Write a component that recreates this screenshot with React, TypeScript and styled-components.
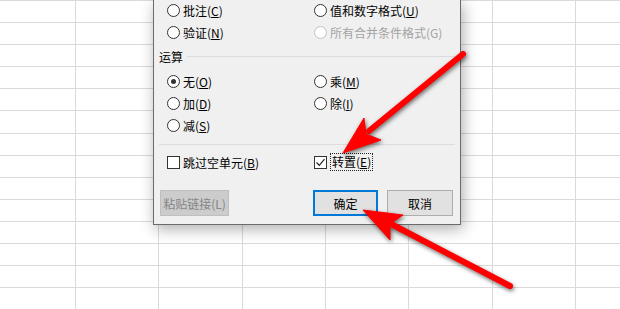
import React from 'react'
import styled, { createGlobalStyle } from 'styled-components'

const GlobalStyle = createGlobalStyle`
  html, body {
    margin: 0;
    padding: 0;
    background: #ffffff;
    overflow: hidden;
  }
  body {
    font-family: "Noto Sans CJK SC", "Noto Sans", sans-serif;
    font-size: 12px;
    color: #000;
  }
`

const Page = styled.div`
  position: relative;
  width: 620px;
  height: 309px;
  overflow: hidden;
  background: #ffffff;
`

const Sheet = styled.div`
  display: grid;
  grid-template-columns: repeat(8, 83.33px);
  grid-auto-rows: 22.1px;
  margin-left: -7.33px;
  margin-top: -21.1px;
`

const Cell = styled.div`
  border-right: 1px solid #dadada;
  border-bottom: 1px solid #dadada;
`

const Dialog = styled.div`
  position: absolute;
  left: 153px;
  top: 0;
  width: 308px;
  height: 225px;
  box-sizing: border-box;
  display: flex;
  flex-direction: column;
  padding: 0 5px;
  background: #f0f0f0;
  border: 1px solid #6b6b6b;
  border-top: none;
  box-shadow: 2px 4px 14px rgba(0, 0, 0, 0.32);
`

const OptionGrid = styled.div<{ $top?: number }>`
  display: grid;
  grid-template-columns: 147px 1fr;
  grid-auto-rows: 22px;
  padding-left: 8px;
  margin-top: ${p => p.$top ?? 0}px;
`

const Option = styled.label<{ $disabled?: boolean }>`
  display: flex;
  align-items: center;
  gap: 3px;
  white-space: nowrap;
  color: ${p => (p.$disabled ? '#a3a3a3' : '#000')};
`

const Radio = styled.span<{ $checked?: boolean; $disabled?: boolean }>`
  width: 13px;
  height: 13px;
  box-sizing: border-box;
  border-radius: 50%;
  border: 1px solid ${p => (p.$disabled ? '#c2c2c2' : '#333')};
  background: #ffffff;
  display: flex;
  align-items: center;
  justify-content: center;
  flex: none;

  &::after {
    content: '';
    width: 5px;
    height: 5px;
    border-radius: 50%;
    background: #333;
    display: ${p => (p.$checked ? 'block' : 'none')};
  }
`

const Check = styled.span`
  width: 13px;
  height: 13px;
  box-sizing: border-box;
  border: 1px solid #333;
  background: #ffffff;
  display: flex;
  align-items: center;
  justify-content: center;
  flex: none;
`

const Focus = styled.span`
  border: 1px dotted #222;
  padding: 0 1px;
  line-height: 16px;
`

const SectionHeader = styled.div`
  display: flex;
  align-items: center;
  gap: 4px;
  height: 27px;
`

const Rule = styled.div`
  flex: 1;
  height: 1px;
  background: #dcdcdc;
`

const Divider = styled.div`
  height: 1px;
  margin-top: 8px;
  background: #dcdcdc;
`

const ButtonRow = styled.div`
  display: flex;
  align-items: center;
  gap: 9px;
  margin-top: 17px;
  padding: 0 2px 0 1px;
`

const Spacer = styled.div`
  flex: 1;
`

const Button = styled.button<{ $width: number; $primary?: boolean }>`
  width: ${p => p.$width}px;
  height: 26px;
  box-sizing: border-box;
  padding: 0;
  font-family: inherit;
  font-size: 12px;
  color: #000;
  background: #e1e1e1;
  border: ${p => (p.$primary ? '2px solid #0078d7' : '1px solid #adadad')};

  &:disabled {
    background: #cccccc;
    border-color: #bfbfbf;
    color: #858585;
  }
`

const Overlay = styled.svg`
  position: absolute;
  left: 0;
  top: 0;
  pointer-events: none;
  filter: drop-shadow(1px 2px 2px rgba(0, 0, 0, 0.55));
`

const Key = ({ text, k }: { text: string; k: string }) => (
  <span>
    {text}(<u>{k}</u>)
  </span>
)

const RadioOption = ({ text, k, checked, disabled }: { text: string; k: string; checked?: boolean; disabled?: boolean }) => (
  <Option $disabled={disabled}>
    <Radio $checked={checked} $disabled={disabled} />
    {disabled ? <span>{text}({k})</span> : <Key text={text} k={k} />}
  </Option>
)

const CheckMark = () => (
  <svg width="11" height="11" viewBox="0 0 11 11">
    <path d="M1.5 5.5 L4.3 8.3 L9.5 2.2" fill="none" stroke="#222" strokeWidth="1.2" />
  </svg>
)

const Arrow = ({ shaft, head }: { shaft: [number, number, number, number]; head: string }) => (
  <g fill="#ff0000" stroke="#ff0000">
    <line x1={shaft[0]} y1={shaft[1]} x2={shaft[2]} y2={shaft[3]} strokeWidth="6" strokeLinecap="round" />
    <polygon points={head} strokeWidth="1" strokeLinejoin="round" />
  </g>
)

const App = () => {
  const cells = Array.from({ length: 8 * 15 })

  return (
    <Page>
      <GlobalStyle />
      <Sheet>
        {cells.map((_, i) => (
          <Cell key={i} />
        ))}
      </Sheet>

      <Dialog>
        <OptionGrid $top={-1}>
          <RadioOption text="批注" k="C" />
          <RadioOption text="值和数字格式" k="U" />
          <RadioOption text="验证" k="N" />
          <RadioOption text="所有合并条件格式" k="G" disabled />
        </OptionGrid>

        <SectionHeader>
          <span>运算</span>
          <Rule />
        </SectionHeader>

        <OptionGrid>
          <RadioOption text="无" k="O" checked />
          <RadioOption text="乘" k="M" />
          <RadioOption text="加" k="D" />
          <RadioOption text="除" k="I" />
          <RadioOption text="减" k="S" />
        </OptionGrid>

        <Divider />

        <OptionGrid $top={6}>
          <Option>
            <Check />
            <Key text="跳过空单元" k="B" />
          </Option>
          <Option>
            <Check>
              <CheckMark />
            </Check>
            <Focus>
              <Key text="转置" k="E" />
            </Focus>
          </Option>
        </OptionGrid>

        <ButtonRow>
          <Button $width={69} disabled>
            粘贴链接(L)
          </Button>
          <Spacer />
          <Button $width={65} $primary>
            确定
          </Button>
          <Button $width={66}>取消</Button>
        </ButtonRow>
      </Dialog>

      <Overlay width="620" height="309" viewBox="0 0 620 309">
        <Arrow shaft={[463, 54, 369, 131]} head="343,153 381,140 366,134 364,118" />
        <Arrow shaft={[510, 286, 393, 225]} head="363,210 403,215 390,224 390,240" />
      </Overlay>
    </Page>
  )
}

export default App
